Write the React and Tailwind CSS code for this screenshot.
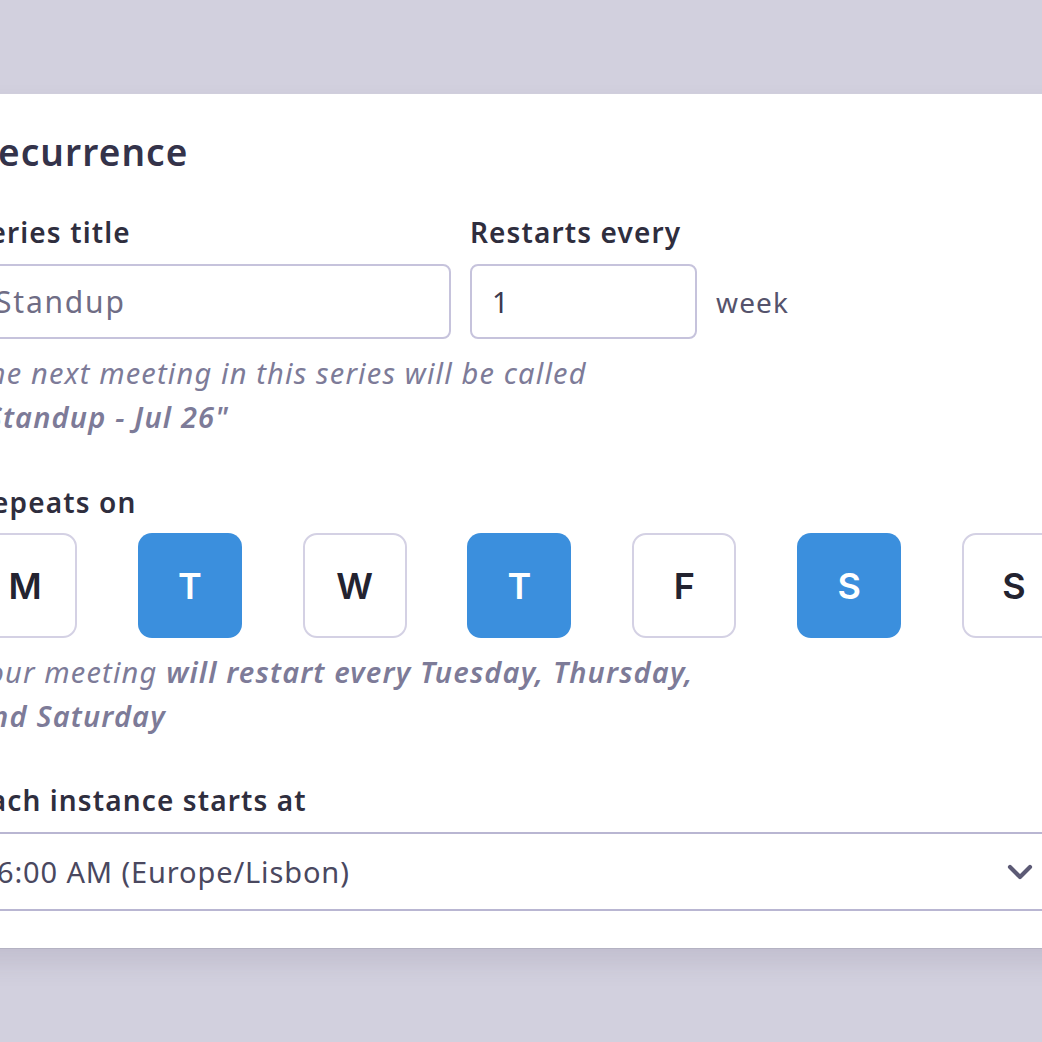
import { ChevronDown } from 'lucide-react';

const days = [
    { label: 'M', on: false },
    { label: 'T', on: true },
    { label: 'W', on: false },
    { label: 'T', on: true },
    { label: 'F', on: false },
    { label: 'S', on: true },
    { label: 'S', on: false },
];

export default function App() {
    return (
        <div className="w-[1042px] h-[1042px] overflow-hidden bg-[#d2d0de] pt-[94px] font-['Noto_Sans',sans-serif]">
            <div className="ml-[-60px] w-[1160px] bg-white pl-[33px] pr-[34px] pt-[38px] pb-[37px] border-b border-[#b4b2c2] shadow-[0_14px_24px_rgba(70,65,100,0.12)]">
                <h2 className="text-[37px] leading-[40px] tracking-[0.03em] font-semibold text-[#34334a]">Recurrence</h2>

                <div className="mt-[42px] flex items-end">
                    <div className="w-[478px]">
                        <Label>Series title</Label>
                        <div className="mt-[14px] h-[75px] rounded-lg border-2 border-[#c6c3dc] flex items-center px-[20px] text-[30px] tracking-[0.06em] text-[#6f6d85]">
                            Standup
                        </div>
                    </div>
                    <div className="ml-[19px] w-[227px]">
                        <Label>Restarts every</Label>
                        <div className="mt-[14px] h-[75px] rounded-lg border-2 border-[#c6c3dc] flex items-center px-[20px] text-[29px] text-[#3c3a50]">
                            1
                        </div>
                    </div>
                    <div className="ml-[19px] h-[75px] flex items-center text-[28px] tracking-[0.04em] text-[#55536c]">week</div>
                </div>

                <p className="mt-[12px] w-[740px] text-[29px] leading-[44px] tracking-[0.04em] italic text-[#7d7b98]">
                    The next meeting in this series will be called{' '}
                    <span className="font-semibold whitespace-nowrap">"Standup - Jul 26"</span>
                </p>

                <div className="mt-[45px]">
                    <Label>Repeats on</Label>
                    <div className="mt-[13px] flex justify-between">
                        {days.map((d, i) => (
                            <div
                                key={i}
                                className={
                                    d.on
                                        ? 'w-[104px] h-[105px] rounded-[14px] bg-[#3b8fdd] flex items-center justify-center text-[36px] font-semibold text-white font-[Inter,sans-serif]'
                                        : 'w-[104px] h-[105px] rounded-[14px] border-2 border-[#d4d1e4] bg-white flex items-center justify-center text-[36px] font-semibold text-[#232330] font-[Inter,sans-serif]'
                                }
                            >
                                {d.label}
                            </div>
                        ))}
                    </div>
                </div>

                <p className="mt-[12px] w-[740px] text-[29px] leading-[44px] tracking-[0.04em] italic text-[#7d7b98]">
                    Your meeting <span className="font-semibold">will restart every Tuesday, Thursday, and Saturday</span>
                </p>

                <div className="mt-[44px]">
                    <Label>Each instance starts at</Label>
                    <div className="mt-[14px] h-[79px] rounded-lg border-2 border-[#b9b6d2] flex items-center justify-between pl-[22px] pr-[24px] text-[29px] tracking-[0.03em] text-[#4a485f]">
                        <span>6:00 AM (Europe/Lisbon)</span>
                        <ChevronDown className="w-[40px] h-[40px] text-[#5c5a75]" strokeWidth={2.5} />
                    </div>
                </div>
            </div>
        </div>
    );
}

function Label({ children }) {
    return <div className="text-[28px] leading-[36px] tracking-[0.04em] font-semibold text-[#2f2e3e]">{children}</div>;
}
